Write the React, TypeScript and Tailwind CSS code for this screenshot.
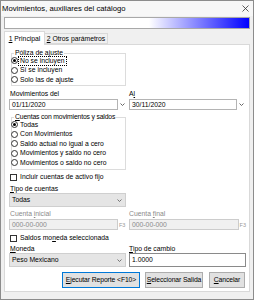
import React from "react";

function Radio({ checked, label, focus }: { checked?: boolean; label: React.ReactNode; focus?: boolean }) {
  return (
    <div className="flex items-center h-[9.5px] -ml-[1px] whitespace-nowrap">
      <span className="w-[7px] h-[7px] rounded-full border border-[#333333] bg-white flex items-center justify-center shrink-0">
        {checked && <span className="w-[3px] h-[3px] rounded-full bg-black" />}
      </span>
      {focus ? (
        <span className="ml-[1px] px-[1px] leading-[8px] outline-1 outline-dotted outline-black">{label}</span>
      ) : (
        <span className="ml-[2px] leading-[8px]">{label}</span>
      )}
    </div>
  );
}

function Check({ label, cls }: { label: React.ReactNode; cls: string }) {
  return (
    <div className={"flex items-center h-[8px] ml-[5px] whitespace-nowrap " + cls}>
      <span className="w-[7px] h-[7px] border border-[#333333] bg-white shrink-0" />
      <span className="ml-[3px] leading-[8px]">{label}</span>
    </div>
  );
}

function Arrow({ color }: { color: string }) {
  return (
    <svg width="5" height="3" viewBox="0 0 5 3" className="shrink-0">
      <path d="M0.5 0.5 L2.5 2.5 L4.5 0.5" fill="none" stroke={color} strokeWidth="0.9" />
    </svg>
  );
}

export default function App() {
  return (
    <div className="w-[254px] h-[300px] bg-[#f0f0f0] border border-[#8c8c8c] flex flex-col text-black font-['Liberation_Sans',Arial,sans-serif] text-[6.8px] overflow-hidden">
      {/* title */}
      <div className="h-[15px] flex items-center justify-between pl-[1px] pr-[4px] bg-[#f7f7f7]">
        <span className="text-[7.7px] leading-[9px] whitespace-nowrap">Movimientos, auxiliares del catálogo</span>
        <svg width="7" height="7" viewBox="0 0 7 7">
          <path d="M0.5 0.5 L6.5 6.5 M6.5 0.5 L0.5 6.5" stroke="#333" strokeWidth="0.8" />
        </svg>
      </div>
      {/* gradient bar */}
      <div className="mt-[1px] mx-[3px] h-[12px] border border-[#a8a8a8] bg-[linear-gradient(to_right,#ffffff_0%,#ffffff_59%,#0000ff_100%)]" />
      {/* tabs */}
      <div className="mx-[3px] mt-[2px] h-[13px] flex items-end whitespace-nowrap">
        <div className="relative z-10 h-[14px] -mb-[1px] w-[41px] bg-white border border-b-0 border-[#d9d9d9] flex items-center justify-center leading-[8px]">
          <span><span className="underline">1</span> Principal</span>
        </div>
        <div className="h-[11px] w-[63px] bg-[#f0f0f0] border border-l-0 border-[#d9d9d9] flex items-center justify-center leading-[8px]">
          <span><span className="underline">2</span> Otros parámetros</span>
        </div>
      </div>
      {/* panel */}
      <div className="mx-[3px] h-[248px] bg-white border border-[#d9d9d9] flex flex-col">
        <fieldset className="mt-[4px] ml-[6px] w-[115px] border border-[#dcdcdc]">
          <legend className="ml-[2px] px-[1px] leading-[8px] whitespace-nowrap">Póliza de ajuste</legend>
          <div className="-mt-[1px]">
            <Radio checked focus label="No se incluyen" />
            <Radio label="Sí se incluyen" />
            <Radio label="Solo las de ajuste" />
          </div>
        </fieldset>

        <div className="flex ml-[4px] mt-[4.5px]">
          <div className="w-[117px] flex flex-col">
            <span className="pl-[1px] leading-[8px] h-[8px]">Movimientos del</span>
            <div className="mt-[1px] flex h-[11px]">
              <div className="flex-1 border border-[#b4b4b4] bg-white flex items-center pl-[2px] leading-[8px]">01/11/2020</div>
              <div className="w-[8px] flex items-center justify-center">
                <Arrow color="#555" />
              </div>
            </div>
          </div>
          <div className="ml-[3px] w-[117px] flex flex-col">
            <span className="leading-[8px] h-[8px]">A<span className="underline">l</span></span>
            <div className="mt-[1px] flex h-[11px]">
              <div className="flex-1 border border-[#b4b4b4] bg-white flex items-center pl-[2px] leading-[8px]">30/11/2020</div>
              <div className="w-[9px] flex items-center justify-center">
                <Arrow color="#555" />
              </div>
            </div>
          </div>
        </div>

        <fieldset className="mt-[3px] ml-[6px] w-[115px] border border-[#dcdcdc] pb-[1px]">
          <legend className="ml-[2px] px-[1px] leading-[8px] whitespace-nowrap tracking-[-0.15px]"><span className="underline">C</span>uentas con movimientos y saldos</legend>
          <div className="-mt-[1px]">
            <Radio checked label="Todas" />
            <Radio label="Con Movimientos" />
            <Radio label="Saldo actual no igual a cero" />
            <Radio label="Movimientos y saldo no cero" />
            <Radio label="Movimientos o saldo no cero" />
          </div>
        </fieldset>

        <Check cls="mt-[3.5px]" label="Incluir cuentas de activo fijo" />

        <span className="ml-[5px] mt-[4px] leading-[8px] h-[8px]"><span className="underline">T</span>ipo de cuentas</span>
        <div className="ml-[4px] w-[117px] h-[14px] bg-[#e5e5e5] border border-[#cfcfcf] flex items-center justify-between pl-[2px] pr-[3px] leading-[8px]">
          <span>Todas</span>
          <Arrow color="#666" />
        </div>

        <div className="flex ml-[4px] mt-[3px]">
          <div className="w-[117px] flex flex-col text-[#8a8a8a]">
            <span className="pl-[1px] leading-[8px] h-[8px]">Cuenta <span className="underline">i</span>nicial</span>
            <div className="mt-[1px] flex h-[11px] items-center">
              <div className="w-[109px] h-[11px] border border-[#cccccc] bg-[#f0f0f0] flex items-center pl-[2px] leading-[8px]">000-00-000</div>
              <span className="ml-[1px] text-[5.5px] leading-[6px] text-[#999]">F3</span>
            </div>
          </div>
          <div className="ml-[3px] w-[117px] flex flex-col text-[#8a8a8a]">
            <span className="leading-[8px] h-[8px]">Cuenta <span className="underline">f</span>inal</span>
            <div className="mt-[1px] flex h-[11px] items-center">
              <div className="w-[110px] h-[11px] border border-[#cccccc] bg-[#f0f0f0] flex items-center pl-[2px] leading-[8px]">000-00-000</div>
              <span className="ml-[1px] text-[5.5px] leading-[6px] text-[#999]">F3</span>
            </div>
          </div>
        </div>

        <Check cls="mt-[4px]" label={<>Saldos mo<span className="underline">n</span>eda seleccionada</>} />

        <div className="flex ml-[4px] mt-[3px]">
          <div className="w-[117px] flex flex-col">
            <span className="pl-[1px] leading-[8px] h-[8px]"><span className="underline">M</span>oneda</span>
            <div className="h-[14px] bg-[#e5e5e5] border border-[#cfcfcf] flex items-center justify-between pl-[2px] pr-[3px] leading-[8px]">
              <span>Peso Mexicano</span>
              <Arrow color="#666" />
            </div>
          </div>
          <div className="ml-[3px] w-[117px] flex flex-col">
            <span className="leading-[8px] h-[8px]"><span className="underline">T</span>ipo de cambio</span>
            <div className="h-[14px] bg-white border border-[#8a8a8a] flex items-center pl-[2px] leading-[8px]">1.0000</div>
          </div>
        </div>

        <div className="mt-[5px] flex justify-end pr-[4px] tracking-[-0.1px]">
          <div className="w-[78px] h-[16px] bg-[#e1e1e1] border border-[#0078d7] flex items-center justify-center leading-[8px] whitespace-nowrap">
            <span><span className="underline">E</span>jecutar Reporte &lt;F10&gt;</span>
          </div>
          <div className="ml-[5px] w-[58px] h-[16px] bg-[#e1e1e1] border border-[#adadad] flex items-center justify-center leading-[8px] whitespace-nowrap">
            <span><span className="underline">S</span>eleccionar Salida</span>
          </div>
          <div className="ml-[6px] w-[36px] h-[16px] bg-[#e1e1e1] border border-[#adadad] flex items-center justify-center leading-[8px] whitespace-nowrap">
            <span><span className="underline">C</span>ancelar</span>
          </div>
        </div>
      </div>
    </div>
  );
}
